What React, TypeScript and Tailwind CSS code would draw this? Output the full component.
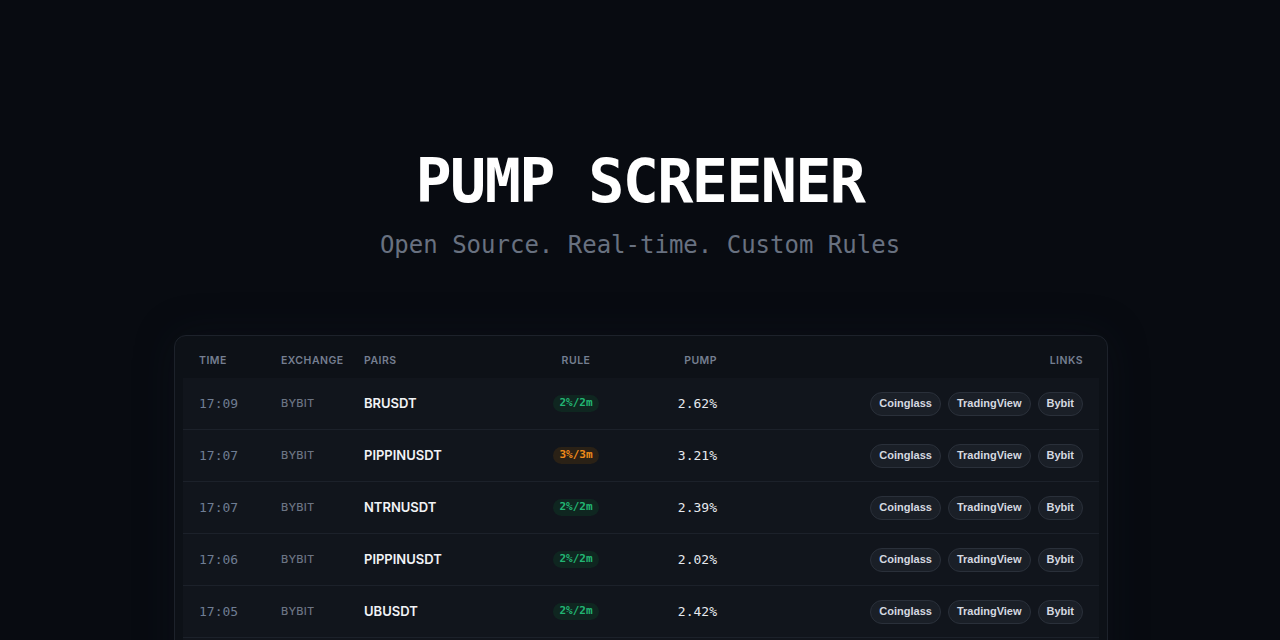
import React from "react";

const mono = { fontFamily: '"DejaVu Sans Mono", "Liberation Mono", monospace' };
const arial = { fontFamily: '"Liberation Sans", Arial, sans-serif' };

type Row = { time: string; pair: string; rule: string; hot?: boolean; pump: string };

const rows: Row[] = [
  { time: "17:09", pair: "BRUSDT", rule: "2%/2m", pump: "2.62%" },
  { time: "17:07", pair: "PIPPINUSDT", rule: "3%/3m", hot: true, pump: "3.21%" },
  { time: "17:07", pair: "NTRNUSDT", rule: "2%/2m", pump: "2.39%" },
  { time: "17:06", pair: "PIPPINUSDT", rule: "2%/2m", pump: "2.02%" },
  { time: "17:05", pair: "UBUSDT", rule: "2%/2m", pump: "2.42%" },
];

const grid = "grid grid-cols-[82px_83px_172px_112px_101px_1fr] items-center";

function LinkPill({ label }: { label: string }) {
  return (
    <span
      className="h-[24px] px-[8px] rounded-full bg-[#1a1f27] border border-[#2a303a] text-[11px] font-bold text-[#d5d9e0] flex items-center"
      style={arial}
    >
      {label}
    </span>
  );
}

export default function App() {
  return (
    <div
      className="w-full h-[640px] overflow-hidden bg-[#080b11] text-white"
      style={{ fontFamily: 'Inter, "Liberation Sans", sans-serif' }}
    >
      <div className="pt-[151px] flex flex-col items-center">
        <h1
          className="text-[60px] leading-[60px] font-bold tracking-[-1.6px] text-white"
          style={mono}
        >
          PUMP SCREENER
        </h1>
        <p className="mt-[18px] text-[24px] leading-[32px] text-[#687180]" style={mono}>
          Open Source. Real-time. Custom Rules
        </p>
      </div>

      <div className="mt-[74px] flex justify-center pl-[2px]">
        <div className="w-[934px] rounded-[12px] border border-[#1d222b] bg-[#0d1117] px-2 pt-2 shadow-[0_0_40px_rgba(20,28,40,0.25)]">
          <div className={`${grid} h-[34px] text-[10.5px] font-semibold tracking-[0.045em] text-[#757f91]`}>
            <div className="pl-[16px]">TIME</div>
            <div className="pl-[16px]">EXCHANGE</div>
            <div className="pl-[16px]">PAIRS</div>
            <div className="text-center">RULE</div>
            <div className="text-right pr-[16px]">PUMP</div>
            <div className="text-right pr-[16px]">LINKS</div>
          </div>
          {rows.map((r, i) => (
            <div
              key={i}
              className={`${grid} h-[52px] bg-[#11151c] border-b border-[#1c212a]`}
            >
              <div className="pl-[16px] text-[13px] text-[#6f7d93]" style={mono}>
                {r.time}
              </div>
              <div className="pl-[16px] text-[11px] font-medium tracking-[0.02em] text-[#6c7483]">
                BYBIT
              </div>
              <div className="pl-[16px] text-[13px] font-semibold text-[#f1f3f6]">{r.pair}</div>
              <div className="flex justify-center">
                <span
                  className={`h-[17px] px-[6px] rounded-full text-[11px] font-bold flex items-center ${
                    r.hot ? "bg-[#2a2116] text-[#f08c1a]" : "bg-[#0f2620] text-[#22b573]"
                  }`}
                  style={mono}
                >
                  {r.rule}
                </span>
              </div>
              <div className="text-right pr-[16px] text-[13px] text-[#e6e9ee]" style={mono}>
                {r.pump}
              </div>
              <div className="flex justify-end gap-[7px] pr-[16px]">
                <LinkPill label="Coinglass" />
                <LinkPill label="TradingView" />
                <LinkPill label="Bybit" />
              </div>
            </div>
          ))}
          <div className="h-[52px] bg-[#11151c]" />
        </div>
      </div>
    </div>
  );
}
